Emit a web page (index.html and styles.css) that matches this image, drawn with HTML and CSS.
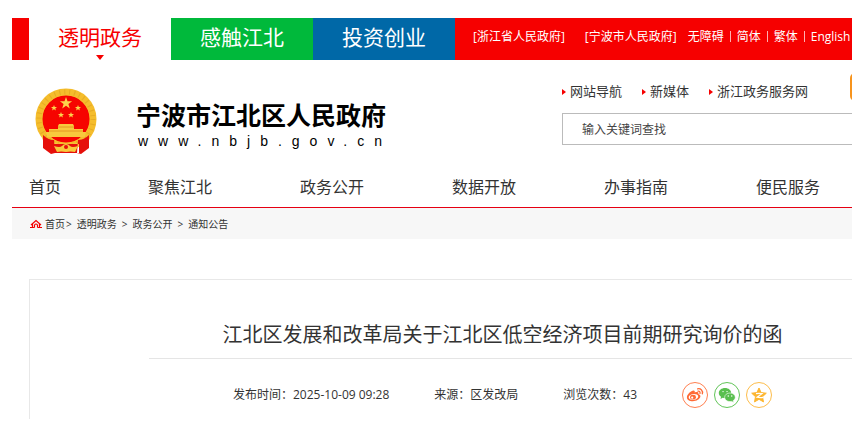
FILE: index.html
```html
<!DOCTYPE html>
<html lang="zh-CN">
<head>
<meta charset="utf-8">
<title>江北区发展和改革局关于江北区低空经济项目前期研究询价的函</title>
<link rel="stylesheet" href="styles.css">
</head>
<body>
<div class="page">
  <div class="topbar">
    <nav class="tabs">
      <a class="tab tab-active" href="#">透明政务</a>
      <a class="tab tab-green" href="#">感触江北</a>
      <a class="tab tab-blue" href="#">投资创业</a>
    </nav>
    <div class="gov-links">
      <a href="#">[浙江省人民政府]</a>
      <a href="#">[宁波市人民政府]</a>
    </div>
    <div class="lang-links">
      <a href="#">无障碍</a><a href="#">简体</a><a href="#">繁体</a><a href="#">English</a>
    </div>
  </div>

  <header class="header">
    <a class="brand" href="#">
      <svg class="emblem" viewBox="0 0 62 66" aria-hidden="true">
        <circle cx="31" cy="31" r="27" fill="#f60400" stroke="#f5bd2c" stroke-width="7"/>
        <circle cx="31" cy="31" r="27" fill="none" stroke="#d99a1c" stroke-width="5" stroke-dasharray="1 4" opacity=".5"/>
        <circle cx="31" cy="31" r="23" fill="#f60400"/>
        <path fill="#fcd34c" d="m31 9 1.500 4.300h4.600l-3.700 2.800 1.400 4.400-3.800-2.700-3.800 2.700 1.400-4.400-3.700-2.800h4.600z"/>
        <path id="star" fill="#fcd34c" d="m19 17 .8 2h2.200l-1.700 1.400.6 2.200-1.900-1.300-1.900 1.300.6-2.200-1.700-1.400h2.200z"/>
        <use href="#star" x="24"/><use href="#star" x="7" y="7"/><use href="#star" x="17" y="7"/>
        <path fill="#f8c93d" d="M24 36h14l1 2v3h9v3H14v-3h9v-3zM11 44h40l-1 5H12z"/>
        <path stroke="#e08d1c" stroke-width=".8" d="M23 39h16M14 43h34"/>
        <path fill="#f8c93d" d="M6 47q7 9 25 9t25-9l-3 8q-4 3-9 4l-6 1h-14l-6-1q-5-1-9-4z"/>
        <path fill="#e60f0b" d="M8 47q5 5 11 5l1 13-4 1-8-6zM54 47q-5 5-11 5l-1 13 4 1 8-6zM18 56h26v9H18z"/>
        <path fill="#f8c93d" d="M19 58q6 2 8 0a5 5 0 0 1 8 0q2 2 8 0l-3 6q-4-1-9 0-5-1-9 0z"/>
        <circle cx="31" cy="59" r="2" fill="#e60f0b"/>
      </svg>
      <span class="brand-text">
        <span class="brand-name">宁波市江北区人民政府</span>
        <span class="brand-url">www.nbjb.gov.cn</span>
      </span>
    </a>
    <div class="tools">
      <div class="quick-links">
        <a href="#">网站导航</a>
        <a href="#">新媒体</a>
        <a href="#">浙江政务服务网</a>
        <button class="service" type="button" aria-label="服务"></button>
      </div>
      <input class="search" type="search" placeholder="输入关键词查找" aria-label="输入关键词查找">
    </div>
  </header>

  <nav class="main-nav">
    <a href="#">首页</a>
    <a href="#">聚焦江北</a>
    <a href="#">政务公开</a>
    <a href="#">数据开放</a>
    <a href="#">办事指南</a>
    <a href="#">便民服务</a>
  </nav>

  <nav class="crumbs">
    <svg class="home" viewBox="0 0 12 10" aria-hidden="true">
      <path fill="none" stroke="#f30000" stroke-width="1.200" d="M1 6 6 1.500 11 6M2.500 5v3.500M9.500 5v3.500M4.500 8.500V6q1.500-2 3 0v2.500M0 8.500h4.500M7.500 8.500H12"/>
    </svg>
    <a href="#">首页</a><span class="sep-first">&gt;</span>
    <a href="#">透明政务</a><span class="sep">&gt;</span>
    <a href="#">政务公开</a><span class="sep">&gt;</span>
    <a href="#">通知公告</a>
  </nav>

  <article class="article">
    <h1>江北区发展和改革局关于江北区低空经济项目前期研究询价的函</h1>
    <div class="meta">
      <span>发布时间：2025-10-09 09:28</span>
      <span>来源：区发改局</span>
      <span>浏览次数：43</span>
      <div class="share">
        <a class="weibo" href="#" aria-label="微博">
          <svg viewBox="0 0 18 18">
            <path fill="#ff6a35" fill-rule="evenodd" d="M7.500 4.500c1.200-.2 1.600.9 1.200 2 2-.9 4.300-.6 3.700 1.400 1.200.4 2.300 1.200 2 2.700-.4 2.700-4 4.700-7.600 4.700C3.500 15.300.9 13.700.9 11.200c0-2.900 4.200-6.400 6.600-6.700zM7.200 8c-2.700.2-4.700 1.800-4.500 3.500s2.300 2.700 5 2.400 4.700-1.900 4.500-3.600S9.900 7.800 7.200 8z"/>
            <ellipse cx="7" cy="11.200" rx="2.900" ry="2.400" fill="#ff6a35"/>
            <circle cx="6.200" cy="11.700" r="1.100" fill="#fff"/>
            <path fill="none" stroke="#ff6a35" stroke-width="1.300" stroke-linecap="round" d="M11.600 2.800c3.300-.6 5.600 2 4.700 5M12 5.200c1.500-.2 2.300.8 2 2.100"/>
          </svg>
        </a>
        <a class="wechat" href="#" aria-label="微信">
          <svg viewBox="0 0 18 18">
            <path fill="#5abf4f" d="M7 2C3.500 2 .8 4.200.8 7c0 1.600.9 2.900 2.200 3.800L2.500 13l2.200-1.200q1.100.3 2.300.3C10.500 12 13.200 9.800 13.200 7S10.500 2 7 2z"/>
            <path fill="#5abf4f" stroke="#fff" stroke-width=".6" d="M12 7c-3 0-5.400 1.900-5.400 4.300s2.400 4.300 5.400 4.300q.9 0 1.700-.2l2 1.100-.5-1.900c1.300-.8 2.100-2 2.100-3.300C17.300 8.900 15 7 12 7z"/>
            <path stroke="#fff" stroke-width="1.300" stroke-linecap="round" d="M5 5.600h.1M9 5.600h.1M10.200 10h.1M13.700 10h.1"/>
          </svg>
        </a>
        <a class="qzone" href="#" aria-label="QQ空间">
          <svg viewBox="0 0 18 18">
            <path fill="#fdb62f" stroke="#fdb62f" stroke-linejoin="round" d="m9 2 2.100 4.600 5.200.6-3.800 3.500 1 5.200L9 13.300l-4.500 2.600 1-5.200-3.800-3.500 5.200-.6z"/>
            <path fill="none" stroke="#fff" stroke-width="1.200" d="M6 7.700q3-.5 6 0l-5 3.500q3 .7 6 .2"/>
          </svg>
        </a>
      </div>
    </div>
  </article>
</div>
</body>
</html>
```
FILE: styles.css
```css
* {
  box-sizing: border-box;
}

body {
  margin: 0;
  background: #fff;
  color: #333;
  font: 12px/20px "Open Sans", "Noto Sans CJK SC", sans-serif;
}

a {
  color: inherit;
  text-decoration: none;
  white-space: nowrap;
}

.page {
  display: flex;
  flex-direction: column;
  min-height: calc(100vh - 41px);
  margin: 18px 11px 23px 12px;
  overflow: hidden;
}

.topbar {
  display: flex;
  height: 42px;
  padding-left: 17px;
  overflow: hidden;
  background: #f60000;
  color: #fff;
  line-height: 38px;
}

.tabs {
  display: flex;
  flex: none;
}

.tab {
  position: relative;
  width: 142px;
  font-size: 21px;
  text-align: center;
}

.tab-active {
  background: #fff;
  color: #f60000;
}

.tab-active::after {
  content: "";
  position: absolute;
  bottom: 0;
  left: 50%;
  margin-left: -4px;
  border: 4px solid transparent;
  border-top: 5px solid #f60000;
  border-bottom: 0;
}

.tab-green {
  background: #00b93b;
}

.tab-blue {
  background: #0068a7;
}

.gov-links {
  display: flex;
  gap: 20px;
  padding-left: 18px;
}

.lang-links {
  display: flex;
  padding-left: 11px;
}

.lang-links a + a::before {
  content: "";
  display: inline-block;
  height: 11px;
  margin: 0 6px;
  border-left: 1px solid #ffb0b0;
  vertical-align: -1px;
}

.header {
  display: flex;
  justify-content: space-between;
  height: 107px;
}

.brand {
  display: flex;
  gap: 39px;
  padding: 28px 0 0 23px;
  color: #000;
}

.emblem {
  width: 62px;
  height: 66px;
}

.brand-text {
  display: flex;
  flex-direction: column;
  padding-top: 10px;
}

.brand-name {
  font-size: 25px;
  font-weight: 700;
  line-height: 34px;
}

.brand-url {
  padding-left: 2px;
  font: 14px/18px "Liberation Sans", sans-serif;
  letter-spacing: 10px;
}

.tools {
  width: 290px;
  padding-top: 13px;
}

.quick-links {
  display: flex;
  align-items: center;
  height: 28px;
  margin-bottom: 12px;
  font-size: 13px;
}

.quick-links a {
  margin-right: 20px;
  padding-top: 8px;
}

.quick-links a::before {
  content: "";
  display: inline-block;
  margin-right: 4px;
  border: 3px solid transparent;
  border-left: 4px solid #f60000;
  border-right: 0;
  vertical-align: 1px;
}

.service {
  flex: none;
  width: 90px;
  height: 28px;
  margin-left: auto;
  margin-right: -88px;
  border: 0;
  border-radius: 5px;
  background: #f7941d;
}

.search {
  display: block;
  width: calc(100% + 2px);
  height: 32px;
  padding: 0 19px;
  border: 1px solid #bbb;
  border-radius: 0;
  background: #fff;
  font: inherit;
  appearance: none;
}

.search::placeholder {
  color: #444;
}

.main-nav {
  display: grid;
  grid-template-columns: 119px repeat(5, 152px);
  height: 41px;
  padding-left: 17px;
  border-bottom: 1px solid #e60012;
  font-size: 16px;
  line-height: 40px;
}

.crumbs {
  display: flex;
  align-items: center;
  height: 31px;
  padding-left: 18px;
  background: #f7f7f7;
  font-size: 10px;
}

.home {
  width: 12px;
  height: 10px;
  margin-right: 3px;
}

.sep-first {
  margin: 0 5px 0 1px;
}

.sep {
  margin: 0 5px;
}

.article {
  flex: 1;
  margin: 40px 0 0 17px;
  padding: 40px 0 0 119px;
  border: solid #e8e8e8;
  border-width: 1px 0 0 1px;
}

h1 {
  margin: 0;
  padding: 0 0 8px 4px;
  border-bottom: 1px solid #e5e5e5;
  font-size: 20px;
  font-weight: 400;
  line-height: 30px;
  text-align: center;
}

.meta {
  display: flex;
  align-items: center;
  gap: 45px;
  padding: 23px 0 0 84px;
  white-space: nowrap;
}

.share {
  display: flex;
  gap: 6px;
}

.share a {
  display: flex;
  align-items: center;
  justify-content: center;
  width: 26px;
  height: 26px;
  border: 1px solid;
  border-radius: 50%;
}

.share svg {
  width: 18px;
  height: 18px;
}

.weibo {
  color: #ff7f50;
}

.wechat {
  color: #62c558;
}

.qzone {
  color: #fdbd4b;
}
```
